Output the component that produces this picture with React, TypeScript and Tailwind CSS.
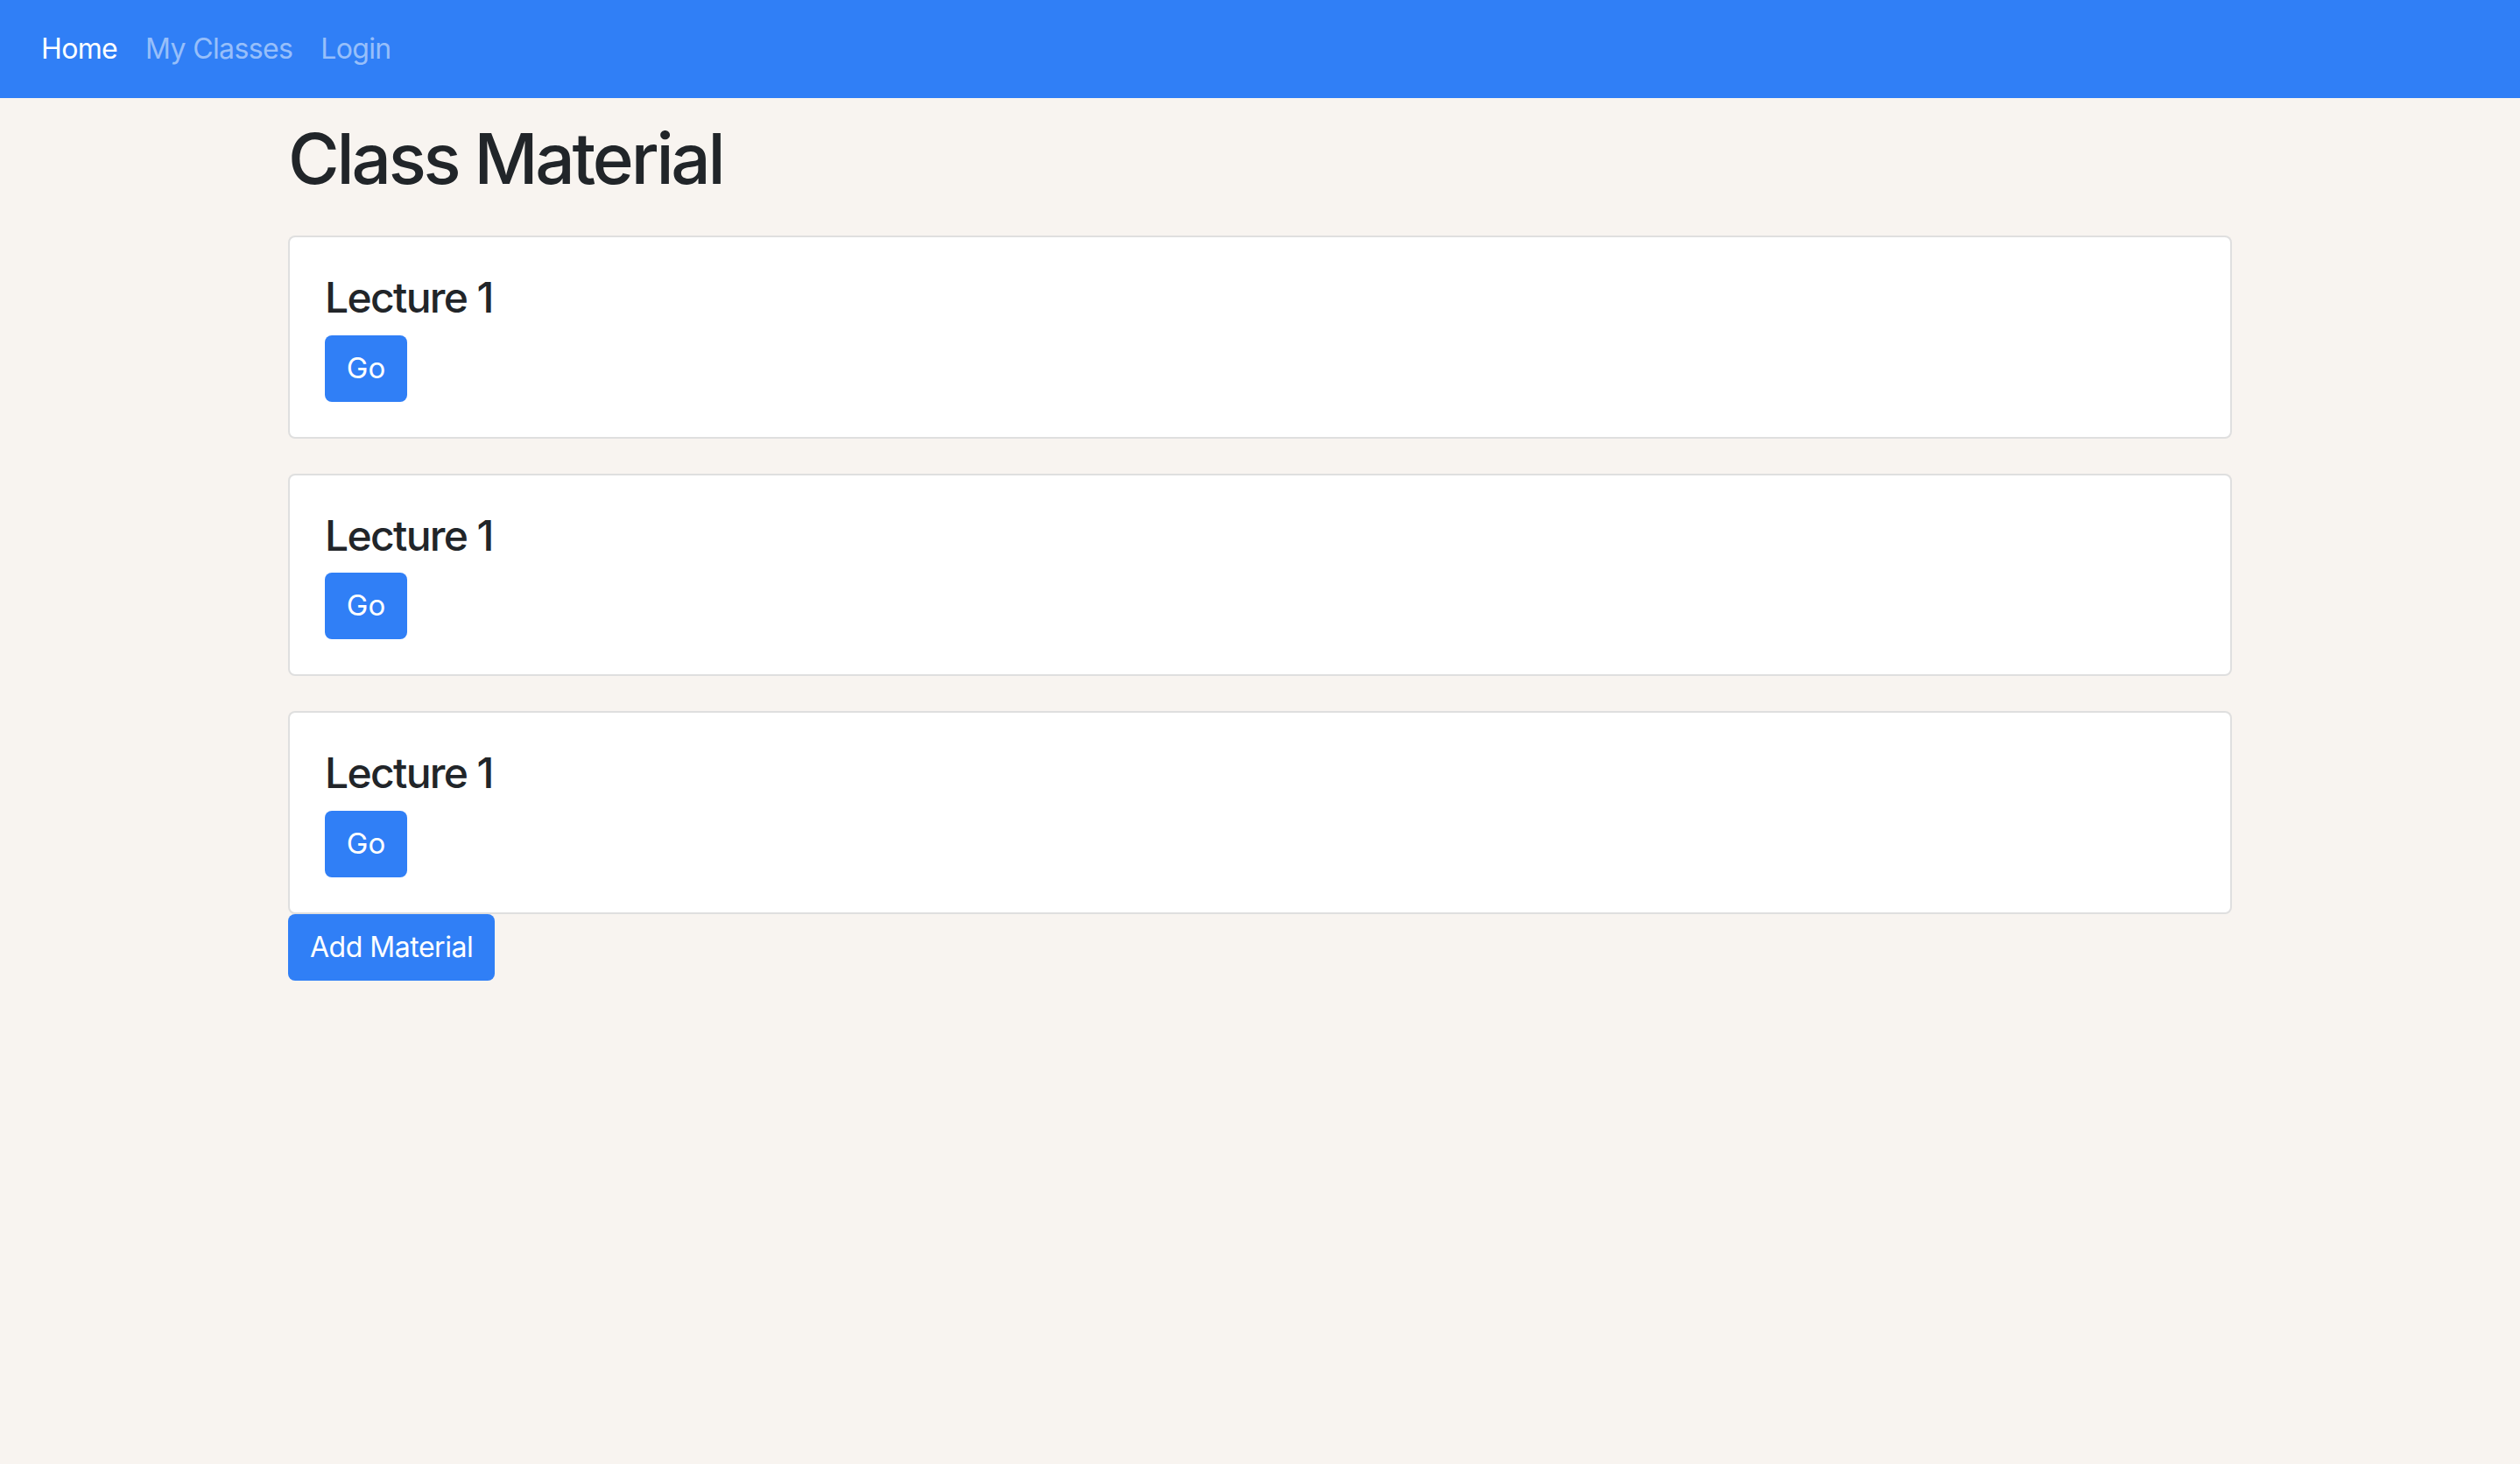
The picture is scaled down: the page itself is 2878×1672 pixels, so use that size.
const lectures = ['Lecture 1', 'Lecture 1', 'Lecture 1'];

export default function App() {
  return (
    <div className="min-h-screen bg-[#f8f4f0] text-[#212529]" style={{ fontFamily: 'Inter, "Noto Sans", sans-serif' }}>
      <nav className="flex h-[112px] items-center bg-[#307ff6] px-[31px]">
        <a className="px-[16px] text-[32px] leading-[48px] tracking-[-0.02em] text-white" href="#">Home</a>
        <a className="px-[16px] text-[32px] leading-[48px] tracking-[-0.02em] text-white/50" href="#">My Classes</a>
        <a className="px-[16px] text-[32px] leading-[48px] tracking-[-0.02em] text-white/50" href="#">Login</a>
      </nav>

      <main className="mx-auto w-[2220px]">
        <h1 className="mt-[21px] mb-[40px] text-[80px] font-medium leading-[96px] tracking-[-0.04em]">Class Material</h1>

        <div className="flex flex-col gap-[40px]">
          {lectures.map((title, i) => (
            <div key={i} className="rounded-[8px] border-2 border-black/[0.125] bg-white p-[40px]">
              <h4 className="mb-[14px] text-[48px] font-medium leading-[57.6px] tracking-[-0.035em]">{title}</h4>
              <button className="h-[76px] w-[94px] rounded-[8px] bg-[#307ff6] text-[33px] text-white">Go</button>
            </div>
          ))}
        </div>

        <button className="h-[76px] rounded-[8px] bg-[#307ff6] px-[25px] text-[32px] tracking-[-0.015em] text-white">Add Material</button>
      </main>
    </div>
  );
}
